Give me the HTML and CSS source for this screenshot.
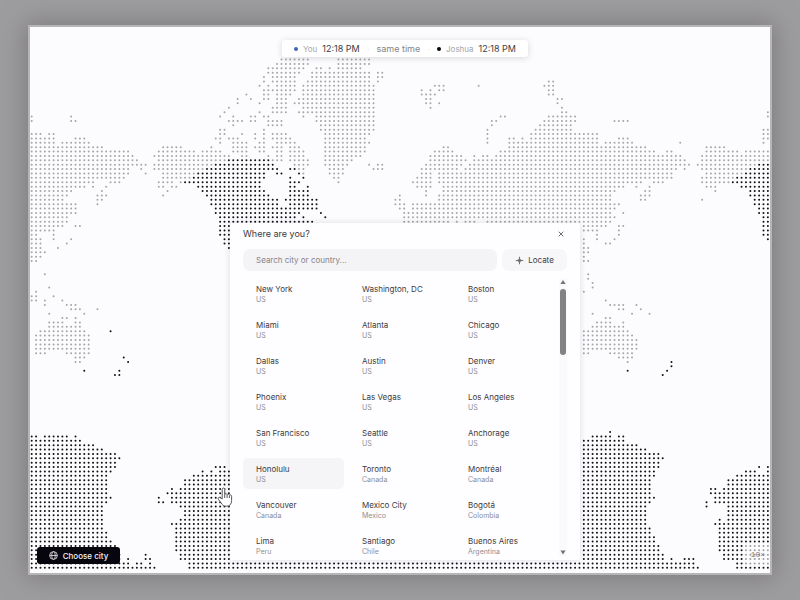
FILE: index.html
```html
<!DOCTYPE html>
<html lang="en">
<head>
<meta charset="utf-8">
<meta name="viewport" content="width=device-width, initial-scale=1">
<title>World clock</title>
<link rel="stylesheet" href="styles.css">
</head>
<body>
<main class="frame">
  <svg class="map" viewBox="0 0 740 546" preserveAspectRatio="xMidYMid slice" aria-hidden="true">
    <path id="day" class="dots-day"></path>
    <path id="night" class="dots-night"></path>
  </svg>

  <header class="times">
    <span class="person"><i class="dot dot-you"></i><span class="who">You</span><time>12:18 PM</time></span>
    <span class="sep">·</span>
    <span class="diff">same time</span>
    <span class="sep">·</span>
    <span class="person"><i class="dot"></i><span class="who">Joshua</span><time>12:18 PM</time></span>
  </header>

  <section class="dialog" role="dialog" aria-labelledby="dialog-title">
    <div class="dialog-head">
      <h1 id="dialog-title">Where are you?</h1>
      <button class="close" type="button" aria-label="Close">
        <svg viewBox="0 0 8 8"><path d="M1.700 1.700l4.600 4.600M6.300 1.700l-4.600 4.600"/></svg>
      </button>
    </div>
    <div class="search-row">
      <input class="search" type="text" aria-label="Search city or country" placeholder="Search city or country...">
      <button class="locate" type="button">
        <svg viewBox="0 0 10 10"><path d="M5 .8v8.400M.8 5h8.400"/><circle cx="5" cy="5" r="1.700"/></svg>
        Locate
      </button>
    </div>
    <div class="list">
      <div class="cities">
        <button class="city" type="button"><b>New York</b><small>US</small></button>
        <button class="city" type="button"><b>Washington, DC</b><small>US</small></button>
        <button class="city" type="button"><b>Boston</b><small>US</small></button>
        <button class="city" type="button"><b>Miami</b><small>US</small></button>
        <button class="city" type="button"><b>Atlanta</b><small>US</small></button>
        <button class="city" type="button"><b>Chicago</b><small>US</small></button>
        <button class="city" type="button"><b>Dallas</b><small>US</small></button>
        <button class="city" type="button"><b>Austin</b><small>US</small></button>
        <button class="city" type="button"><b>Denver</b><small>US</small></button>
        <button class="city" type="button"><b>Phoenix</b><small>US</small></button>
        <button class="city" type="button"><b>Las Vegas</b><small>US</small></button>
        <button class="city" type="button"><b>Los Angeles</b><small>US</small></button>
        <button class="city" type="button"><b>San Francisco</b><small>US</small></button>
        <button class="city" type="button"><b>Seattle</b><small>US</small></button>
        <button class="city" type="button"><b>Anchorage</b><small>US</small></button>
        <button class="city active" type="button"><b>Honolulu</b><small>US</small></button>
        <button class="city" type="button"><b>Toronto</b><small>Canada</small></button>
        <button class="city" type="button"><b>Montréal</b><small>Canada</small></button>
        <button class="city" type="button"><b>Vancouver</b><small>Canada</small></button>
        <button class="city" type="button"><b>Mexico City</b><small>Mexico</small></button>
        <button class="city" type="button"><b>Bogotá</b><small>Colombia</small></button>
        <button class="city" type="button"><b>Lima</b><small>Peru</small></button>
        <button class="city" type="button"><b>Santiago</b><small>Chile</small></button>
        <button class="city" type="button"><b>Buenos Aires</b><small>Argentina</small></button>
      </div>
      <div class="scrollbar" aria-hidden="true">
        <svg viewBox="0 0 8 8"><path d="M4 2l2.600 4h-5.200z"/></svg>
        <div class="track"><div class="thumb"></div></div>
        <svg viewBox="0 0 8 8"><path d="M4 6.500l2.600-4h-5.200z"/></svg>
      </div>
    </div>
  </section>

  <button class="choose" type="button">
    <svg viewBox="0 0 10 10"><circle cx="5" cy="5" r="4.300"/><ellipse cx="5" cy="5" rx="2" ry="4.300"/><path d="M.8 5h8.400"/></svg>
    Choose city
  </button>
  <span class="zoom-level">10×</span>

  <svg class="pointer" viewBox="0 0 16 20" aria-hidden="true">
    <path d="M5.200 12V2.400c0-1.800 2.500-1.800 2.500 0v5c.4-1 2.200-.9 2.400.3.500-.9 2.100-.7 2.300.5.700-.7 2.200-.3 2.200 1v4.300c0 3.600-1.800 5.700-5 5.700-3 0-4.200-1-5.400-3.200L1.400 12.300c-.9-1.500.8-2.500 1.900-1.500z"/>
    <path d="M7.700 7.500v3.500M10.100 8v3M12.400 8.500v2.500"/>
  </svg>
</main>
<script src="map.js"></script>
</body>
</html>
```
FILE: styles.css
```css
* { box-sizing: border-box; }

body {
  margin: 0;
  min-height: 100vh;
  padding: 25px 28px;
  display: flex;
  background: #9d9c9e;
  font-family: Inter, "Liberation Sans", sans-serif;
  font-size: 8px;
  color: #3c3b40;
}

button, input { font: inherit; color: inherit; border: 0; margin: 0; }
button { cursor: pointer; }

.frame {
  position: relative;
  flex: 1;
  border: 2px solid #b7b5b8;
  background: #fcfbfe;
  box-shadow: 0 0 24px 2px #7b797b;
}

.map { position: absolute; inset: 0; width: 100%; height: 100%; }
.map path { fill: none; stroke-linecap: round; }
.dots-day { stroke: #a6a5a8; stroke-width: 2px; }
.dots-night { stroke: #111014; stroke-width: 2px; }

.times {
  position: absolute;
  top: 13px;
  left: calc(50% - 118px);
  width: 246px;
  height: 17px;
  padding: 0 12px;
  display: flex;
  align-items: center;
  justify-content: space-between;
  border-radius: 3px;
  background: #fff;
  box-shadow: 0 1px 6px rgba(30, 25, 40, .16);
}
.person { display: flex; align-items: center; gap: 5px; }
.dot { width: 4px; height: 4px; border-radius: 50%; background: #08070c; }
.dot-you { background: #3f66b8; }
.who { color: #a5a4a8; }
.diff { font-size: 9px; color: #858488; }
.sep { color: #d5d4d8; }
time { font-size: 9px; }

.dialog {
  position: absolute;
  top: 196px;
  left: calc(50% - 170px);
  width: 350px;
  padding: 4px 13px 0;
  height: 337px;
  display: flex;
  flex-direction: column;
  border-radius: 3px;
  background: rgba(254, 253, 255, .985);
  box-shadow: 0 0 6px rgba(30, 25, 40, .14);
}
.dialog-head { display: flex; justify-content: space-between; align-items: center; height: 13px; }
h1 { margin: 0; font-size: 9px; font-weight: 400; }
.close { width: 12px; height: 12px; padding: 2px; background: none; display: flex; }
.close svg { width: 8px; height: 8px; fill: none; stroke: #6a696e; stroke-width: 1; }

.search-row { display: flex; gap: 5px; margin-top: 9px; }
.search { flex: 1; min-width: 0; height: 22px; padding: 0 13px; border-radius: 7px; background: #f4f3f6; outline: 0; }
.search::placeholder { color: #858488; opacity: 1; }
.locate {
  width: 65px;
  height: 22px;
  padding: 0;
  display: flex;
  align-items: center;
  justify-content: center;
  gap: 4px;
  border-radius: 7px;
  background: #f7f6f9;
}
.locate svg { width: 9px; height: 9px; fill: none; stroke: #6a696e; stroke-width: 1; }

.list { flex: 1; min-height: 0; margin-top: 7px; display: flex; justify-content: space-between; overflow: hidden; }
.cities { width: 313px; display: grid; grid-template-columns: repeat(3, 1fr); gap: 5px; align-content: start; }
.city {
  height: 31px;
  padding: 5px 0 0 13px;
  display: flex;
  flex-direction: column;
  border-radius: 5px;
  background: none;
  text-align: left;
  white-space: nowrap;
}
.city.active { background: #f5f4f6; }
.city b { font-weight: 400; line-height: 12px; }
.city small { font-size: 7px; line-height: 9px; color: #8f8e93; }

.scrollbar { width: 8px; margin-bottom: 4px; display: flex; flex-direction: column; gap: 3px; background: #fafafc; }
.scrollbar svg { width: 8px; height: 8px; fill: #737276; }
.track { flex: 1; padding: 0 1px; }
.thumb { height: 66px; border-radius: 3px; background: #828184; }

.choose {
  position: absolute;
  left: 7px;
  bottom: 9px;
  width: 83px;
  height: 17px;
  padding: 0;
  display: flex;
  align-items: center;
  justify-content: center;
  gap: 5px;
  border-radius: 3px;
  background: #07060f;
  color: #f4f3f7;
  font-weight: 500;
}
.choose svg { width: 9px; height: 9px; fill: none; stroke: #d6d5da; stroke-width: 1; }

.zoom-level {
  position: absolute;
  right: 0;
  bottom: 7px;
  padding: 6px 5px 6px 8px;
  background: rgba(252, 251, 254, .6);
  color: #77767a;
  font: 8px/10px "Liberation Mono", monospace;
}

.pointer { position: absolute; left: 187px; top: 460px; width: 16px; height: 20px; fill: #fff; stroke: #58575b; stroke-width: 1; }
```
FILE: map.js
```js
// Each entry is "row:columns", with inclusive column ranges.
const day = `
0:57-63,70-77|1:56-63,70-77|2:54-62,65-66,68,70-75|3:54-61,64-77,79-80|4:53,55-60,64-77,79-80|5:53,55-60,63-77,79,118-119
6:52,54,56-60,62-78,92-94,102,117-119|7:53-60,62-78,89,91,93-94,118-119|8:49,53-54,56-59,62-78,89-92,118-119
9:47,50,53-54,56-58,61-78,90-91,120-121|10:47,52,56-58,60-78,90-91,93,120|11:45,55-58,62-78,91,121
12:44,52,55-58,61-78,121-122,168|13:0,9,43,46,50-51,53-54,62,65-78,107-108,118-122,123-124,168
14:0,9-10,45-48,50-51,54-57,65-78,105-106,117-124,133-136|15:46,54-57,66-78,105,116-123|16:43-44,53,66-78,104,115-123,167-168
17:0-2,4-5,43-44,48,51,53,55-58,67-77,104,114-129,167-168|18:0-5,10-12,42-43,45-47,51,53,55-59,67-76,104,109-110,112,114-129,134-136,167-168
19:0-5,7-13,43,46-49,52-53,56-60,67-77,104,109-129,131-137,148,167|20:0-16,30-34,41,46-49,51-53,55-57,59-61,67-76,94-95,109-140,154-158
21:0-22,29-37,39-43,46-49,52-53,56-57,59-62,67-76,92-96,107-142,145-146,154-161,163-168
22:0-23,28-45,48-49,54,56-57,59-62,67-75,91-98,101,103-104,106-148,153-168|23:0-24,29-44,55-57,59-63,67-73,91-99,101-149,153-168
24:0-26,28-41,60-63,67-72,77,79-80,90-98,100-150,152-165|25:0-22,25,28-39,61-62,68-71,78-80,89-97,99-147,149,153-163
26:0-22,26,30-37,62,68-71,89-91,93-146,154-162|27:0-21,30-36,69-70,88-91,93-146,153-160|28:0-14,18-20,29-32,34,70,87-91,93-139,142-144,153-159
29:0-12,14,17,29-30,32-33,88-91,94-135,138,141,154-156|30:0-9,16,31,90,94-133,140-141,156|31:0-8,15-17,30,84,90,93-132,139-141
32:0-7,15-16,83-84,93-132,139-140,153|33:0-10,15,83-85,87-134|34:0-10,84-85,87-133|35:0-10,85-132,135|36:0-8,85-133
37:0-8,85-95,97,99-101,104-132|38:0-7,10-11,126-131,134-135|39:0-5,126-129,134|40:0-1,5,129,134|41:0-2,5,9,126,129,133
42:0-2,8,126,131-132|43:0-2,6,126-127|44:0-3,126-127|45:0-2,126|46:0-1,126-127|49:3,127|50:127|51:128|52:4,128|53:1,126
54:0-1,5|55:0-1,3,7,131|56:3,8-10,132-135,138|57:9-11,15,134-135,139|58:4,12,128,137,141|59:7-8,10,131-132|60:4-7,10-11,129-132,135
61:4-11,128-135|62:2-12,126-136|63:1-13,126-137|64:1-13,126-138|65:1-13,126-138|66:1-13,126-138|67:1-3,8-13,126-127,132-137|68:10-12,134-137|69:10-11,136`;

const night = `
23:45-54|24:42-55,166-168|25:40-56,59-60,164-168|26:38-53,56-57,61,163-168|27:37-53,59,62,161-168|28:35-52,59-61,160-168
29:38-52,59-60,63,162-168|30:39-53,59-63,164-168|31:40-54,59-63,164-168|32:41-56,58-65,165-168|33:41-56,59-65,165-168
34:42-65,166-168|35:42-61,66,166-168|36:43-60,62,67,167-168|37:43-64,167-168|38:43-45,167-168|39:43-45,167-168|40:43-45,167-168
41:44-45,168|42:44-45|43:45|62:18|68:21|69:22,146|70:146|71:12,20,136,145|72:19-20,144
85:132|86:0-1,3-8,10,128-132,134-135|87:0-11,126-135|88:0-14,126-138|89:0-16,126-140|90:0-19,126-143|91:0-20,126-144
92:0-19,126-143|93:0-19,42-44,126-143,166,168|94:0-18,39,41,43-45,126-142,163-165,168|95:0-17,37-45,126-142,161-168
96:0-17,35-45,126-141,159-168|97:0-17,35-45,126-141,159-168|98:0-17,32,34-45,126-141,155-156,158-168|99:0-17,31-45,126-141,155-168
100:0-18,29,32-45,126-142,156-168|101:0-17,29-30,32-45,126-141,154,156-168|102:0-16,34-45,126-140,154,159-168|103:0-16,35-45,126-140,159-168
104:0-16,35-45,126-140,159-168|105:0-16,34-45,126-140,157,159-168|106:0-16,32-45,126-140,156-168|107:0-16,33-45,126-141,157-168
108:0-17,33-45,126-141,157-168|109:0-17,33-45,126-142,157-168|110:0-18,33-45,126-142,157-168|111:0-19,33-45,126-143,157-168
112:0-19,33-45,126-143,157-168|113:0-20,26,34-45,126-144,158-168|114:0-20,22,26-27,34-45,126-144,146,149-151,158-168
115:0-22,24-25,27,36-151,161-168|116:0-28,36-152,161-168`;

const pitch = 4.382;

function dots(source) {
  let d = "";
  for (const entry of source.trim().split(/[|\n]/)) {
    const [row, spans] = entry.split(":");
    const y = (32.550 + row * pitch).toFixed(2);
    for (const span of spans.split(",")) {
      const [from, to = from] = span.split("-").map(Number);
      for (let c = from; c <= to; c++) d += `M${(1.700 + c * pitch).toFixed(2)} ${y}h0`;
    }
  }
  return d;
}

document.getElementById("day").setAttribute("d", dots(day));
document.getElementById("night").setAttribute("d", dots(night));
```
